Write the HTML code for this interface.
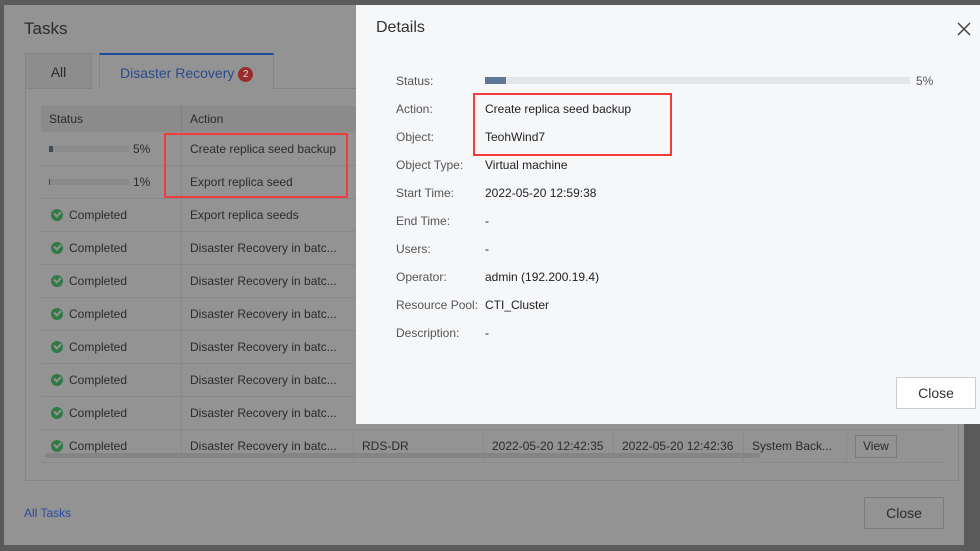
<!DOCTYPE html>
<html><head><style>
*{box-sizing:border-box;margin:0;padding:0}
body{width:980px;height:551px;background:#5b5b5b;font-family:"Liberation Sans",sans-serif;position:relative;overflow:hidden;font-size:12px;color:#2b2b2b}
.a{position:absolute}
#dlg{left:4px;top:5px;width:960px;height:540px;background:#939393}
.t{white-space:nowrap}
.row{position:absolute;left:41px;width:905px;height:33px;border-bottom:1px solid #8a8a8a}
.cell{position:absolute;top:0;height:33px;line-height:33px;border-left:1px solid #8a8a8a;padding-left:8px;white-space:nowrap}
.ok{display:inline-block;width:12px;height:12px;border-radius:50%;background:#2f7a45;vertical-align:-2px;margin-right:6px;position:relative}
.ok:after{content:"";position:absolute;left:3px;top:2px;width:5px;height:3px;border-left:2px solid #939393;border-bottom:2px solid #939393;transform:rotate(-45deg)}
#det{left:356px;top:5px;width:624px;height:419px;background:#f6f7f9;color:#222}
.lab{position:absolute;left:40px;color:#555;font-size:12px}
.val{position:absolute;left:129px;font-size:12px}
</style></head><body>
<div id="dlg" class="a"></div>
<div class="a t" style="left:24px;top:19px;font-size:17px;color:#2a2a2a">Tasks</div>
<div class="a" style="left:25px;top:53px;width:67px;height:36px;border:1px solid #848484;background:#8d8d8d;text-align:center;line-height:36px;font-size:14px">All</div>
<div class="a" style="left:99px;top:53px;width:175px;height:36px;border:1px solid #848484;border-top:2px solid #1f4a99;border-bottom:none;background:#939393;line-height:36px;font-size:14px;color:#2a4a8e;padding-left:20px">Disaster Recovery <span style="display:inline-block;width:15px;height:15px;border-radius:50%;background:#9b2a2a;color:#ddd;font-size:10px;line-height:15px;text-align:center;vertical-align:1px">2</span></div>
<div class="a" style="left:25px;top:88px;width:934px;height:393px;border:1px solid #848484;border-top:none"></div>
<div class="a" style="left:274px;top:88px;width:685px;height:1px;background:#848484"></div>
<div class="a" style="left:41px;top:106px;width:905px;height:26px;background:#8b8b8b"></div>
<div class="a t" style="left:49px;top:112px;font-size:12px">Status</div>
<div class="a" style="left:181px;top:106px;width:1px;height:26px;background:#808080"></div>
<div class="a t" style="left:190px;top:112px">Action</div>
<!-- rows -->
<div class="row" style="top:133px"><div class="cell" style="left:0;border:none;width:140px"><span class="a" style="left:8px;top:13px;width:80px;height:6px;background:#8a8a8a"></span><span class="a" style="left:8px;top:13px;width:4px;height:6px;background:#3e4a5a"></span><span class="a" style="left:92px">5%</span></div><div class="cell" style="left:140px;width:172px">Create replica seed backup</div></div>
<div class="row" style="top:166px"><div class="cell" style="left:0;border:none;width:140px"><span class="a" style="left:8px;top:13px;width:80px;height:6px;background:#8a8a8a"></span><span class="a" style="left:8px;top:13px;width:1px;height:6px;background:#3e4a5a"></span><span class="a" style="left:92px">1%</span></div><div class="cell" style="left:140px;width:172px">Export replica seed</div></div>
<div class="row" style="top:199px"><div class="cell" style="left:0;border:none;padding-left:10px"><span class="ok"></span>Completed</div><div class="cell" style="left:140px">Export replica seeds</div></div>
<div class="row" style="top:232px"><div class="cell" style="left:0;border:none;padding-left:10px"><span class="ok"></span>Completed</div><div class="cell" style="left:140px">Disaster Recovery in batc...</div></div>
<div class="row" style="top:265px"><div class="cell" style="left:0;border:none;padding-left:10px"><span class="ok"></span>Completed</div><div class="cell" style="left:140px">Disaster Recovery in batc...</div></div>
<div class="row" style="top:298px"><div class="cell" style="left:0;border:none;padding-left:10px"><span class="ok"></span>Completed</div><div class="cell" style="left:140px">Disaster Recovery in batc...</div></div>
<div class="row" style="top:331px"><div class="cell" style="left:0;border:none;padding-left:10px"><span class="ok"></span>Completed</div><div class="cell" style="left:140px">Disaster Recovery in batc...</div></div>
<div class="row" style="top:364px"><div class="cell" style="left:0;border:none;padding-left:10px"><span class="ok"></span>Completed</div><div class="cell" style="left:140px">Disaster Recovery in batc...</div></div>
<div class="row" style="top:397px"><div class="cell" style="left:0;border:none;padding-left:10px"><span class="ok"></span>Completed</div><div class="cell" style="left:140px">Disaster Recovery in batc...</div></div>
<div class="row" style="top:430px"><div class="cell" style="left:0;border:none;padding-left:10px"><span class="ok"></span>Completed</div><div class="cell" style="left:140px">Disaster Recovery in batc...</div><div class="cell" style="left:312px">RDS-DR</div><div class="cell" style="left:442px">2022-05-20 12:42:35</div><div class="cell" style="left:572px">2022-05-20 12:42:36</div><div class="cell" style="left:702px">System Back...</div><div class="cell" style="left:805px"><span style="display:inline-block;border:1px solid #7a7a7a;height:23px;line-height:21px;padding:0 7px;margin-top:4px">View</span></div></div>
<div class="a" style="left:45px;top:453px;width:715px;height:5px;border-radius:3px;background:#858585"></div>
<div class="a" style="left:164px;top:133px;width:184px;height:65px;border:2px solid #f23b3b"></div>
<div class="a t" style="left:24px;top:506px;color:#2a4a9e">All Tasks</div>
<div class="a" style="left:864px;top:497px;width:80px;height:32px;border:1px solid #7c7c7c;text-align:center;line-height:30px;font-size:14px">Close</div>
<!-- details -->
<div id="det" class="a">
<div class="a t" style="left:20px;top:14px;font-size:16px;color:#333">Details</div>
<div class="a" style="left:601px;top:17px;width:14px;height:14px">
<svg width="14" height="14"><path d="M1 1L13 13M13 1L1 13" stroke="#444" stroke-width="1.5"/></svg></div>
<div class="lab" style="top:69px">Status:</div>
<div class="a" style="left:129px;top:72px;width:425px;height:7px;background:#e4e6ea"></div>
<div class="a" style="left:129px;top:72px;width:21px;height:7px;background:#5d7896"></div>
<div class="a" style="left:560px;top:69px;color:#555">5%</div>
<div class="lab" style="top:97px">Action:</div><div class="val" style="top:97px">Create replica seed backup</div>
<div class="lab" style="top:125px">Object:</div><div class="val" style="top:125px">TeohWind7</div>
<div class="lab" style="top:153px">Object Type:</div><div class="val" style="top:153px">Virtual machine</div>
<div class="lab" style="top:181px">Start Time:</div><div class="val" style="top:181px">2022-05-20 12:59:38</div>
<div class="lab" style="top:209px">End Time:</div><div class="val" style="top:209px">-</div>
<div class="lab" style="top:237px">Users:</div><div class="val" style="top:237px">-</div>
<div class="lab" style="top:265px">Operator:</div><div class="val" style="top:265px">admin (192.200.19.4)</div>
<div class="lab" style="top:293px">Resource Pool:</div><div class="val" style="top:293px">CTI_Cluster</div>
<div class="lab" style="top:321px">Description:</div><div class="val" style="top:321px">-</div>
<div class="a" style="left:117px;top:88px;width:199px;height:63px;border:2px solid #f23b3b"></div>
<div class="a" style="left:540px;top:372px;width:80px;height:32px;border:1px solid #ccc;background:#fff;text-align:center;line-height:30px;font-size:14px;color:#333">Close</div>
</div>
</body></html>
